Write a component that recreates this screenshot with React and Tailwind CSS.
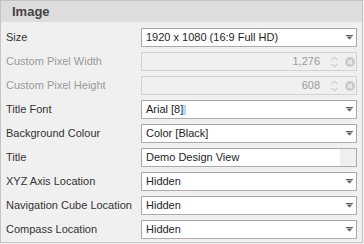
import React from "react";

const font = { fontFamily: '"Liberation Sans", Arial, sans-serif' };

function Arrow() {
  return (
    <svg width="7" height="5" viewBox="0 0 7 5" className="shrink-0">
      <path d="M0 0H7V1H0Z M0.5 1.5H6.5L3.5 4.5Z" fill="#606060" />
    </svg>
  );
}

function Dropdown({ value, highlight }) {
  return (
    <div className="mt-[3px] h-[19px] w-[216px] border border-[#ababab] bg-white flex items-center pl-[4px] pr-[3px]">
      <span className="flex-1 text-[11px] text-[#1e1e1e] leading-none flex items-center whitespace-nowrap">
        {value}
        {highlight && <span className="inline-block w-[3px] h-[10px] bg-[#a8dcf5]" />}
      </span>
      <Arrow />
    </div>
  );
}

function Spin({ value }) {
  return (
    <div className="mt-[3px] h-[19px] w-[216px] border border-[#d2d2d2] bg-[#f0f0f0] flex items-center pr-[1px]">
      <span className="flex-1 text-right text-[11px] text-[#9a9a9a] leading-none pr-[11px]">{value}</span>
      <svg width="7" height="12" viewBox="0 0 7 12" className="mr-[7px]">
        <path d="M0.5 4L3.5 1L6.5 4" stroke="#d0d0d0" strokeWidth="1.2" fill="none" />
        <path d="M0.5 8L3.5 11L6.5 8" stroke="#d0d0d0" strokeWidth="1.2" fill="none" />
      </svg>
      <svg width="10" height="10" viewBox="0 0 10 10">
        <circle cx="5" cy="5" r="5" fill="#c8c8c8" />
        <path d="M3 3L7 7M7 3L3 7" stroke="#f0f0f0" strokeWidth="1.4" />
      </svg>
    </div>
  );
}

function TextBox({ value }) {
  return (
    <div className="mt-[3px] h-[19px] w-[216px] border border-[#ababab] bg-white flex items-stretch">
      <span className="flex-1 text-[11px] text-[#1e1e1e] leading-none flex items-center pl-[4px] whitespace-nowrap">{value}</span>
      <span className="w-[16px] bg-[#efefef]" />
    </div>
  );
}

function Row({ label, disabled, children }) {
  return (
    <div className="h-[24px] flex items-start">
      <div
        className={
          "w-[140px] pl-[5px] mt-[3px] h-[19px] flex items-center text-[11px] leading-none whitespace-nowrap " +
          (disabled ? "text-[#9a9a9a]" : "text-[#333333]")
        }
      >
        {label}
      </div>
      {children}
    </div>
  );
}

export default function App() {
  return (
    <div className="w-[364px] h-[244px] bg-[#f0f0f0]" style={font}>
      <div className="w-[363px] h-[243px] border border-[#c4c4c4] bg-[#f0f0f0] flex flex-col">
        <div className="h-[21px] bg-[#dddddd] flex items-center pl-[11px] text-[13px] font-bold text-[#444444]">
          Image
        </div>
        <div className="pt-[3px] flex flex-col">
          <Row label="Size">
            <Dropdown value="1920 x 1080 (16:9 Full HD)" />
          </Row>
          <Row label="Custom Pixel Width" disabled>
            <Spin value="1,276" />
          </Row>
          <Row label="Custom Pixel Height" disabled>
            <Spin value="608" />
          </Row>
          <Row label="Title Font">
            <Dropdown value="Arial [8]" highlight />
          </Row>
          <Row label="Background Colour">
            <Dropdown value="Color [Black]" />
          </Row>
          <Row label="Title">
            <TextBox value="Demo Design View" />
          </Row>
          <Row label="XYZ Axis Location">
            <Dropdown value="Hidden" />
          </Row>
          <Row label="Navigation Cube Location">
            <Dropdown value="Hidden" />
          </Row>
          <Row label="Compass Location">
            <Dropdown value="Hidden" />
          </Row>
        </div>
      </div>
    </div>
  );
}
